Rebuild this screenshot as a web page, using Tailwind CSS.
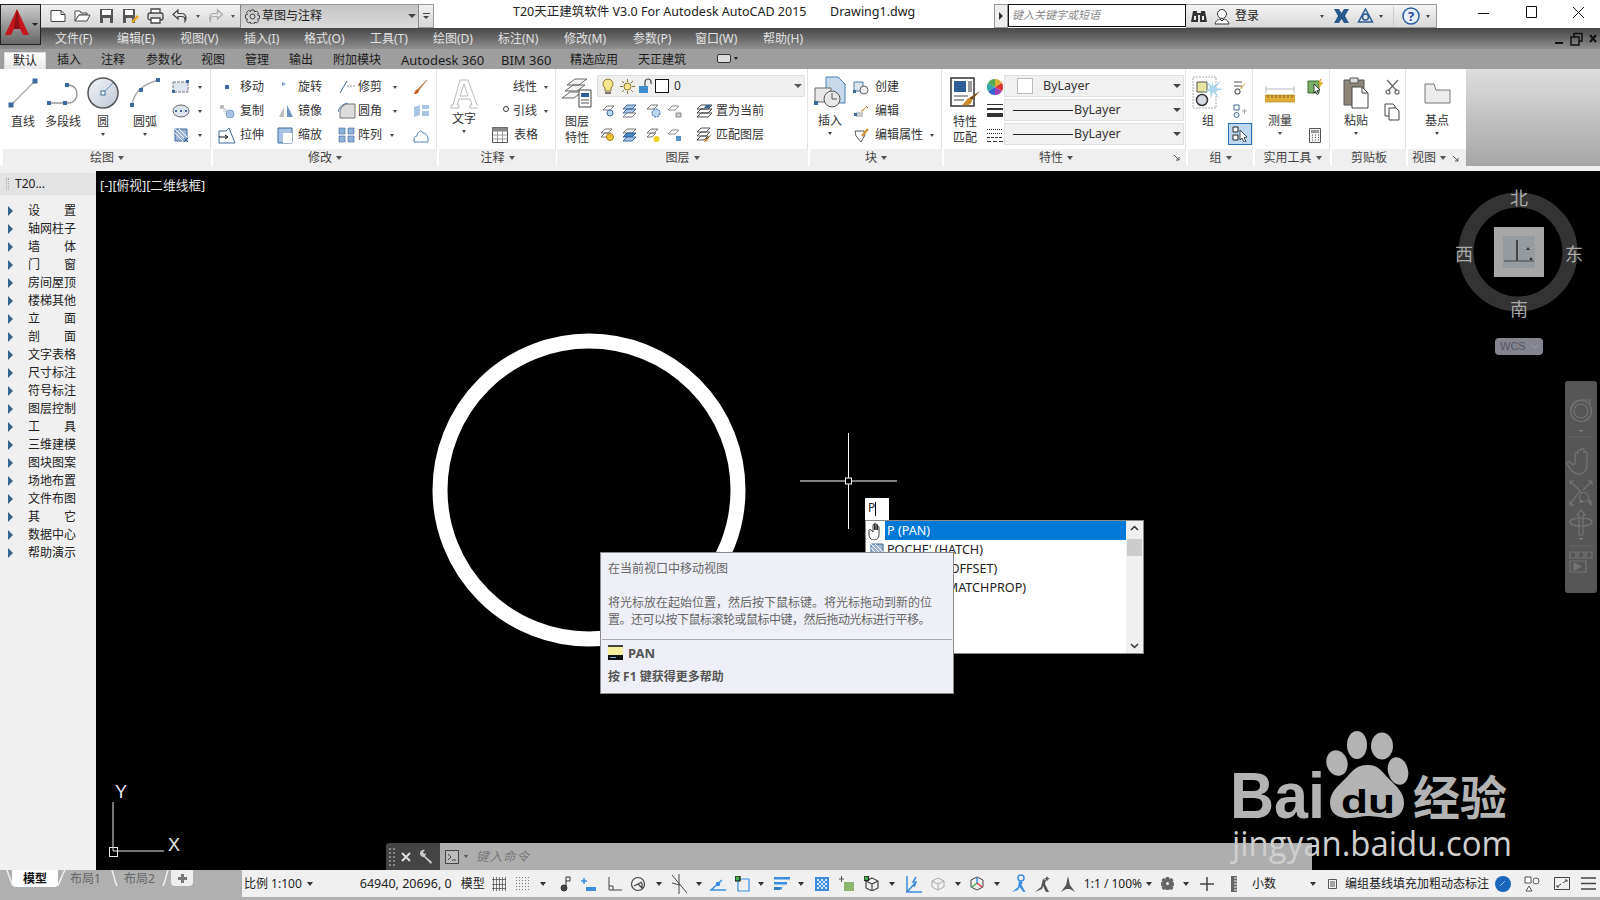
<!DOCTYPE html>
<html lang="zh">
<head>
<meta charset="UTF-8">
<title>T20天正建筑软件</title>
<script src="https://cdn.jsdelivr.net/npm/@tailwindcss/browser@4"></script>
</head>
<body class="w-[1600px] h-[900px] overflow-hidden relative flex flex-col bg-black text-[12px] leading-[14px] text-[#333] font-['Noto_Sans','Noto_Sans_CJK_SC',sans-serif]">

<!-- title bar -->
<div class="h-[28px] bg-white flex shrink-0 items-start relative">
  <div class="absolute left-0 top-[4px] w-[41px] h-[41px] z-10 border border-[#222] bg-gradient-to-b from-[#cfcfcf] to-[#666]">
    <svg class="absolute left-[3px] top-[3px]" width="36" height="30" viewBox="0 0 36 30"><path d="M13 1 L25 27 L19 27 L16 21 L10 21 L7 27 L1 27 Z" fill="#c4161c"/><path d="M13 1 L16 21 L10 21 Z" fill="#8c1014"/><path d="M28 15 h6 l-3 3z" fill="#222"/></svg>
  </div>
  <div class="ml-[41px] mt-[4px] w-[393px] h-[24px] flex items-center bg-gradient-to-b from-[#f2f2f2] to-[#d6d6d6] border-y border-r border-[#999]">
    <svg class="ml-[9px]" width="16" height="16" viewBox="0 0 16 16" fill="#fff" stroke="#444"><path d="M1 2.5h10l4 4v7H1z"/><path d="M11 2.5v4h4" fill="none"/></svg>
    <svg class="ml-[8px]" width="17" height="16" viewBox="0 0 17 16" fill="#fff" stroke="#444"><path d="M1 3h5l1 2h6v2H5L1 13z"/><path d="M5 7h11l-3 6H1z"/></svg>
    <svg class="ml-[8px]" width="15" height="16" viewBox="0 0 15 16"><path d="M1 1h13v14H1z" fill="#555"/><path d="M3 2h9v5H3z" fill="#fff"/><path d="M4 10h7v5H4z" fill="#ddd"/></svg>
    <svg class="ml-[8px]" width="17" height="16" viewBox="0 0 17 16"><path d="M1 1h12v14H1z" fill="#555"/><path d="M3 2h8v5H3z" fill="#fff"/><path d="M4 10h6v5H4z" fill="#ddd"/><path d="M9 14l6-7 2 2-6 6z" fill="#e5a723"/></svg>
    <svg class="ml-[8px]" width="17" height="16" viewBox="0 0 17 16" fill="#fff" stroke="#444" stroke-width="1.3"><path d="M4 5V1h9v4"/><rect x="1" y="5" width="15" height="7" rx="2" fill="#ddd"/><path d="M4 10h9v5H4z"/></svg>
    <svg class="ml-[8px]" width="15" height="14" viewBox="0 0 15 14" fill="none" stroke="#444" stroke-width="1.2"><path d="M6 1L1 5.5 6 10V7.5h4c2 0 3 1 3 3v2c1.500-2 1.500-8-3-8H6z"/></svg>
    <i class="ml-[9px] w-0 h-0 border-x-[2.500px] border-x-transparent border-t-[3px] border-t-[#555]"></i>
    <svg class="ml-[8px]" width="16" height="14" viewBox="0 0 15 14" fill="none" stroke="#aaa" stroke-width="1.2"><path d="M9 1l5 4.500L9 10V7.500H5c-2 0-3 1-3 3v2c-1.500-2-1.500-8 3-8h4z"/></svg>
    <i class="ml-[7px] w-0 h-0 border-x-[2.500px] border-x-transparent border-t-[3px] border-t-[#555]"></i>
    <div class="ml-[5px] w-[179px] h-[23px] bg-gradient-to-b from-[#c4c4c4] to-[#dcdcdc] border-x border-[#888] flex items-center">
      <svg class="ml-[4px]" width="15" height="15" viewBox="0 0 15 15" fill="none" stroke="#444"><circle cx="7.500" cy="7.500" r="2.500"/><path d="M6 1h3l.5 2 2-1 2 2-1 2 2 .5v3l-2 .5 1 2-2 2-2-1-.5 2H6l-.5-2-2 1-2-2 1-2-2-.5V6l2-.5-1-2 2-2 2 1z"/></svg>
      <span class="ml-[2px] text-[12px] text-[#222]">草图与注释</span>
      <i class="ml-auto mr-[2px] w-0 h-0 border-x-[4px] border-x-transparent border-t-[4px] border-t-[#444]"></i>
    </div>
    <div class="flex-1 flex flex-col items-center gap-[2px]"><i class="block w-[7px] h-[1px] bg-[#444]"></i><i class="w-0 h-0 border-x-[3.500px] border-x-transparent border-t-[3px] border-t-[#444]"></i></div>
  </div>
  <div class="ml-[79px] mt-[4px] w-[300px] whitespace-nowrap text-[#222] text-[12.5px] leading-[16px]">T20天正建筑软件 V3.0 For Autodesk AutoCAD 2015</div>
  <div class="ml-[17px] mt-[4px] text-[#222] text-[12.5px] leading-[16px]">Drawing1.dwg</div>
  <div class="absolute left-[994px] top-[4px] w-[14px] h-[24px] bg-[#eee] border border-[#999] flex items-center justify-center"><i class="w-0 h-0 border-y-[4px] border-y-transparent border-l-[4px] border-l-[#333]"></i></div>
  <div class="absolute left-[1008px] top-[4px] w-[178px] h-[23px] bg-white border border-[#111] pl-[3px] italic text-[11px] leading-[20px] text-[#888]">键入关键字或短语</div>
  <div class="absolute left-[1186px] top-[4px] w-[251px] h-[24px] bg-gradient-to-b from-[#f4f4f4] to-[#d8d8d8] border-y border-r border-[#999] flex items-center">
    <svg class="ml-[5px]" width="16" height="16" viewBox="0 0 16 16" fill="#333"><path d="M2 3h4v2h4V3h4l2 11H9V7H7v7H0z"/><path d="M3 8h2v4H3zM11 8h2v4h-2z" fill="#eee"/></svg>
    <svg class="ml-[7px]" width="16" height="17" viewBox="0 0 16 17" fill="#fff" stroke="#333"><circle cx="8" cy="6" r="4.500"/><path d="M1 16c1-4 3-4 5-5l2 2 2-2c2 1 4 1 5 5z"/></svg>
    <span class="ml-[5px] text-[#222]">登录</span>
    <i class="ml-[61px] w-0 h-0 border-x-[2.500px] border-x-transparent border-t-[3px] border-t-[#444]"></i>
    <svg class="ml-[10px]" width="15" height="14" viewBox="0 0 15 14" fill="#27598f"><path d="M0 0h5l2.500 4L10 0h5l-4 7 4 7h-5L7.500 10 5 14H0l4-7z"/></svg>
    <svg class="ml-[8px]" width="17" height="16" viewBox="0 0 17 16" fill="none" stroke="#2a5c94" stroke-width="1.500"><path d="M8.500 1l7 13h-14z"/><circle cx="8.500" cy="9" r="3"/></svg>
    <i class="ml-[5px] w-0 h-0 border-x-[2.500px] border-x-transparent border-t-[3px] border-t-[#444]"></i>
    <i class="ml-[10px] w-[1px] h-[20px] bg-[#ccc]"></i>
    <svg class="ml-[8px]" width="18" height="18" viewBox="0 0 18 18"><circle cx="9" cy="9" r="8" fill="#e8eef8" stroke="#2b5ea5" stroke-width="1.500"/><text x="9" y="13.500" font-size="13" font-weight="700" text-anchor="middle" fill="#1e4f9c">?</text></svg>
    <i class="ml-[6px] w-0 h-0 border-x-[2.500px] border-x-transparent border-t-[3px] border-t-[#444]"></i>
  </div>
  <svg class="absolute left-[1478px] top-[5px]" width="112" height="16" viewBox="0 0 112 16" fill="none" stroke="#111"><path d="M0 8.500h11"/><path d="M48.500 1.500h10v11h-10z"/><path d="M95 2l11 11M106 2L95 13"/></svg>
</div>

<!-- menu bar -->
<div class="h-[21px] shrink-0 flex items-center bg-gradient-to-b from-[#474747] to-[#909090] text-[#e2e2e2] pl-[55px] whitespace-nowrap">
  <span class="w-[62px]">文件(F)</span><span class="w-[63px]">编辑(E)</span><span class="w-[64px]">视图(V)</span><span class="w-[60px]">插入(I)</span><span class="w-[66px]">格式(O)</span><span class="w-[63px]">工具(T)</span><span class="w-[65px]">绘图(D)</span><span class="w-[66px]">标注(N)</span><span class="w-[69px]">修改(M)</span><span class="w-[62px]">参数(P)</span><span class="w-[68px]">窗口(W)</span><span>帮助(H)</span>
  <svg class="ml-auto mr-[2px]" width="44" height="14" viewBox="0 0 44 14" fill="none" stroke="#111" stroke-width="1.500"><path d="M1 11h8" stroke-width="2"/><path d="M17 5h8v8h-8zM20 5V1.500h8V9h-3"/><path d="M36 3l6 7M42 3l-6 7" stroke-width="2"/></svg>
</div>

<!-- ribbon tabs -->
<div class="h-[20px] shrink-0 flex items-end bg-[#9e9e9e] text-[#1c1c1c] pl-[4px] whitespace-nowrap">
  <span class="w-[42px] h-[17px] text-center bg-gradient-to-b from-[#fff] to-[#e8e8e8] border-x border-t border-[#ddd] leading-[16px]">默认</span>
  <span class="ml-[11px] w-[44px] h-[16px]">插入</span><span class="w-[45px] h-[16px]">注释</span><span class="w-[55px] h-[16px]">参数化</span><span class="w-[44px] h-[16px]">视图</span><span class="w-[44px] h-[16px]">管理</span><span class="w-[44px] h-[16px]">输出</span><span class="w-[68px] h-[16px]">附加模块</span><span class="w-[100px] h-[16px] text-[13px]">Autodesk 360</span><span class="w-[69px] h-[16px] text-[13px]">BIM 360</span><span class="w-[68px] h-[16px]">精选应用</span><span class="w-[79px] h-[16px]">天正建筑</span>
  <span class="h-[16px] flex items-start"><i class="w-[14px] h-[9px] rounded-[2px] border border-[#333] bg-[#ddd] mt-[1px]"></i><i class="ml-[3px] mt-[4px] w-0 h-0 border-x-[2.500px] border-x-transparent border-t-[3px] border-t-[#222]"></i></span>
</div>

<!-- ribbon -->
<div class="h-[102px] shrink-0 bg-[#f0f0f0] flex items-start">
  <div class="h-[97px] flex-none bg-white flex pl-[3px] gap-[2px]">

    <!-- 绘图 -->
    <section class="w-[208px] flex flex-col">
      <div class="h-[80px] flex border-r border-[#e4e4e4]">
        <div class="w-[40px] flex flex-col items-center pt-[8px]">
          <svg width="32" height="32" viewBox="0 0 32 32"><path d="M4 28L28 4" stroke="#aaa" stroke-width="1.500"/><path d="M1.500 25.500h5v5h-5zM25.500 1.500h5v5h-5z" fill="#3d6a9c"/></svg>
          <span class="mt-[6px]">直线</span>
        </div>
        <div class="w-[40px] flex flex-col items-center pt-[8px]">
          <svg width="34" height="32" viewBox="0 0 34 32" fill="none"><path d="M3 26h19c12 0 12-18 0-18" stroke="#999" stroke-width="1.500"/><path d="M1 24h4v4H1zM17 24h4v4h-4zM19 6h4v4h-4z" fill="#3d6a9c"/></svg>
          <span class="mt-[6px] whitespace-nowrap">多段线</span>
        </div>
        <div class="w-[40px] flex flex-col items-center pt-[8px]">
          <svg width="32" height="32" viewBox="0 0 32 32"><defs><linearGradient id="circleFill" x1="0" y1="0" x2="1" y2="1"><stop offset="0" stop-color="#f2f4f8"/><stop offset="1" stop-color="#bfc8d6"/></linearGradient></defs><circle cx="16" cy="16" r="15" fill="url(#circleFill)" stroke="#555" stroke-width="1.500"/><path d="M16 16L26 6" stroke="#6a93c4"/><rect x="14" y="14" width="4" height="4" fill="#fff" stroke="#3d6a9c"/></svg>
          <span class="mt-[6px]">圆</span>
          <i class="mt-[4px] w-0 h-0 border-x-[2.500px] border-x-transparent border-t-[3px] border-t-[#444]"></i>
        </div>
        <div class="ml-[2px] w-[40px] flex flex-col items-center pt-[8px]">
          <svg width="32" height="32" viewBox="0 0 32 32" fill="none"><path d="M3 28C5 16 12 8 29 3" stroke="#aaa" stroke-width="1.500"/><path d="M1 26h4v4H1zM10 11h4v4h-4zM27 1h4v4h-4z" fill="#3d6a9c"/></svg>
          <span class="mt-[6px]">圆弧</span>
          <i class="mt-[4px] w-0 h-0 border-x-[2.500px] border-x-transparent border-t-[3px] border-t-[#444]"></i>
        </div>
        <div class="flex-1 pt-[6px] flex flex-col">
          <div class="h-[24px] flex items-center pl-[7px]"><svg width="18" height="14" viewBox="0 0 18 14"><path d="M1 2h15v10H1z" fill="#dfe5ee" stroke="#777" stroke-dasharray="3 1"/><path d="M14 0h3v3h-3zM0 10h3v3H0z" fill="#3d6a9c"/></svg><i class="ml-[8px] w-0 h-0 border-x-[2.500px] border-x-transparent border-t-[3px] border-t-[#444]"></i></div>
          <div class="h-[24px] flex items-center pl-[7px]"><svg width="18" height="14" viewBox="0 0 18 14"><ellipse cx="9" cy="7" rx="8" ry="6" fill="#dfe5ee" stroke="#666"/><path d="M8 6h2v2H8zM3 6h2v2H3zM13 6h2v2h-2z" fill="#3d6a9c"/></svg><i class="ml-[8px] w-0 h-0 border-x-[2.500px] border-x-transparent border-t-[3px] border-t-[#444]"></i></div>
          <div class="h-[24px] flex items-center pl-[9px]"><svg width="16" height="15" viewBox="0 0 16 15"><path d="M1 1h12v12H1z" fill="#9db4d6" stroke="#3d6a9c"/><path d="M1 5l8 8M1 1l12 12M5 1l8 8" stroke="#fff"/><path d="M10 10l4 4M14 10l-4 4" stroke="#3d6a9c"/></svg><i class="ml-[8px] w-0 h-0 border-x-[2.500px] border-x-transparent border-t-[3px] border-t-[#444]"></i></div>
        </div>
      </div>
      <div class="h-[17px] pt-[1px] bg-[#efefef] flex items-center justify-center gap-[4px] text-[#444]">绘图<i class="w-0 h-0 border-x-[3.500px] border-x-transparent border-t-[4px] border-t-[#555]"></i></div>
    </section>

    <!-- 修改 -->
    <section class="w-[224px] flex flex-col">
      <div class="h-[80px] pt-[6px] border-r border-[#e4e4e4] grid grid-cols-[62px_62px_72px_28px] grid-rows-[24px_24px_24px]">
        <div class="flex items-center pl-[5px]"><span class="w-[18px] flex justify-center"><i class="w-[4px] h-[4px] bg-[#3d6a9c]"></i></span><span class="ml-[4px]">移动</span></div>
        <div class="flex items-center pl-[1px]"><svg class="w-[19px]" width="19" height="14" viewBox="0 0 19 14"><path d="M6 2l4 2-4 2z" fill="#7ca0c8"/></svg><span class="ml-[3px]">旋转</span></div>
        <div class="flex items-center pl-[1px]"><svg width="18" height="14" viewBox="0 0 18 14" fill="none"><path d="M2 13L9 1" stroke="#3d6a9c"/><path d="M9 6h8" stroke="#999" stroke-dasharray="2 1"/></svg><span class="ml-[2px]">修剪</span><i class="ml-[11px] w-0 h-0 border-x-[2.500px] border-x-transparent border-t-[3px] border-t-[#444]"></i></div>
        <div class="flex items-center justify-center pr-[4px]"><svg width="16" height="16" viewBox="0 0 16 16"><path d="M14 1L6 11l-1-1z" fill="#d08a2c" stroke="#8a5a1a" stroke-width=".5"/><path d="M5 10c-3 1-3 3-4 5 3 0 5-1 5-4z" fill="#c2571a"/></svg></div>

        <div class="flex items-center pl-[5px]"><svg width="18" height="14" viewBox="0 0 18 14"><rect x="2" y="1" width="4" height="4" rx="1" fill="#bbb"/><rect x="5" y="4" width="4" height="4" rx="1" fill="#ddd"/><circle cx="12" cy="10" r="4" fill="#a9c4e4" stroke="#7ca0c8"/></svg><span class="ml-[4px]">复制</span></div>
        <div class="flex items-center pl-[1px]"><svg width="19" height="14" viewBox="0 0 19 14"><path d="M8 3v10H3z" fill="#bbb"/><path d="M11 1v12h6z" fill="#6e95c2"/></svg><span class="ml-[3px]">镜像</span></div>
        <div class="flex items-center pl-[1px]"><svg width="18" height="16" viewBox="0 0 18 16"><path d="M2 15V9c0-4 3-7 7-8h8v14z" fill="#ddd" stroke="#777"/><path d="M0 9C1 4 5 1 10 0" stroke="#3d6a9c" fill="none"/></svg><span class="ml-[2px]">圆角</span><i class="ml-[11px] w-0 h-0 border-x-[2.500px] border-x-transparent border-t-[3px] border-t-[#444]"></i></div>
        <div class="flex items-center justify-center pr-[4px]"><svg width="17" height="14" viewBox="0 0 17 14"><path d="M1 3l6-2v10l-6 2zM9 1h7v4H9zM9 7h7v5H9z" fill="#a9c4e4"/></svg></div>

        <div class="flex items-center pl-[5px]"><svg width="18" height="17" viewBox="0 0 18 17"><path d="M1 4h7l3-3 6 15H1z" fill="#fff" stroke="#3d6a9c"/><path d="M1 10h8M7 8l3 2-3 2" stroke="#111" fill="none"/></svg><span class="ml-[4px]">拉伸</span></div>
        <div class="flex items-center pl-[1px]"><svg width="19" height="17" viewBox="0 0 19 17"><path d="M2 1h14v15H2z" fill="#a9c4e4" stroke="#3d6a9c"/><path d="M7 6h9v10H7z" fill="#fff"/></svg><span class="ml-[3px]">缩放</span></div>
        <div class="flex items-center pl-[1px]"><svg width="18" height="16" viewBox="0 0 18 16" fill="#8fb0d8" stroke="#3d6a9c" stroke-width=".6"><path d="M1 1h6v6H1zM10 1h6v6h-6zM1 9h6v6H1zM10 9h6v6h-6z"/></svg><span class="ml-[2px]">阵列</span><i class="ml-[8px] w-0 h-0 border-x-[2.500px] border-x-transparent border-t-[3px] border-t-[#444]"></i></div>
        <div class="flex items-center justify-center pr-[4px]"><svg width="17" height="15" viewBox="0 0 17 15" fill="none" stroke="#4e82bd"><path d="M1 14v-3c0-2 2-3 3-3 0-4 4-7 6-3 3 0 5 3 5 6v3z"/></svg></div>
      </div>
      <div class="h-[17px] pt-[1px] bg-[#efefef] flex items-center justify-center gap-[4px] text-[#444]">修改<i class="w-0 h-0 border-x-[3.500px] border-x-transparent border-t-[4px] border-t-[#555]"></i></div>
    </section>

    <!-- 注释 -->
    <section class="w-[117px] flex flex-col">
      <div class="h-[80px] flex border-r border-[#e4e4e4]">
        <div class="w-[50px] flex flex-col items-center pt-[10px]">
          <svg width="28" height="30" viewBox="0 0 28 30" fill="#fff" stroke="#bbb"><path d="M10 1h8l9 25h2v3h-9v-3h2l-2-6H9l-2 6h2v3H1v-3h2zM14 5l-4 12h8z"/></svg>
          <span class="mt-[3px]">文字</span>
          <i class="mt-[4px] w-0 h-0 border-x-[2.500px] border-x-transparent border-t-[3px] border-t-[#444]"></i>
        </div>
        <div class="flex-1 pt-[6px] flex flex-col">
          <div class="h-[24px] flex items-center pl-[24px]">线性<i class="ml-[7px] w-0 h-0 border-x-[2.500px] border-x-transparent border-t-[3px] border-t-[#444]"></i></div>
          <div class="h-[24px] flex items-center pl-[14px]"><i class="w-[6px] h-[6px] rounded-full border border-[#333] -mt-[4px]"></i><span class="ml-[4px]">引线</span><i class="ml-[7px] w-0 h-0 border-x-[2.500px] border-x-transparent border-t-[3px] border-t-[#444]"></i></div>
          <div class="h-[24px] flex items-center pl-[3px]"><svg width="16" height="16" viewBox="0 0 16 16"><path d="M.5.5h15v15H.5z" fill="#fff" stroke="#555"/><path d="M.5.5h15v4H.5z" fill="#888"/><path d="M1 8h14M1 12h14M5.500 4v11M10.500 4v11" stroke="#999"/></svg><span class="ml-[6px]">表格</span></div>
        </div>
      </div>
      <div class="h-[17px] pt-[1px] bg-[#efefef] flex items-center justify-center gap-[4px] text-[#444]">注释<i class="w-0 h-0 border-x-[3.500px] border-x-transparent border-t-[4px] border-t-[#555]"></i></div>
    </section>

    <!-- 图层 -->
    <section class="w-[251px] flex flex-col -ml-[1px]">
      <div class="h-[80px] flex border-r border-[#e4e4e4]">
        <div class="w-[42px] flex flex-col items-center pt-[8px]">
          <svg width="32" height="32" viewBox="0 0 32 32"><path d="M6 8L14 2h12l-8 6zM4 14l8-6h12l-8 6zM1 21l8-6h12l-8 6z" fill="#f4f4f4" stroke="#666"/><path d="M18 13h12v17H18z" fill="#fff" stroke="#444"/><path d="M20 16h8v4h-8z" fill="#2d5c96"/><path d="M20 23h8M20 26h8" stroke="#555"/></svg>
          <span class="mt-[5px] leading-[16px] text-center">图层<br>特性</span>
        </div>
        <div class="flex-1 pt-[6px] pr-[2px]">
          <div class="h-[22px] w-[208px] bg-[#efefef] rounded-[1px] border border-[#e0e0e0] flex items-center">
            <svg class="ml-[4px]" width="12" height="17" viewBox="0 0 12 17"><path d="M6 1a5 5 0 0 1 3 9v3H3v-3a5 5 0 0 1 3-9z" fill="#f5e58c" stroke="#8a7a30"/><path d="M3 14h6v2H3z" fill="#777"/></svg>
            <svg class="ml-[5px]" width="17" height="17" viewBox="0 0 17 17" fill="#f5e58c" stroke="#8a7a30"><circle cx="8.500" cy="8.500" r="3.500"/><path d="M8.500 1v3M8.500 13v3M1 8.500h3M13 8.500h3M3 3l2 2M12 12l2 2M14 3l-2 2M5 12l-2 2" fill="none"/></svg>
            <svg class="ml-[2px]" width="14" height="16" viewBox="0 0 14 16"><path d="M1 8h9v7H1z" fill="#3c8ed0"/><path d="M7 8V4a3 3 0 0 1 6 0v2" fill="none" stroke="#444" stroke-width="1.200"/></svg>
            <i class="ml-[3px] w-[14px] h-[14px] bg-white border-[1.500px] border-[#111]"></i>
            <span class="ml-[5px]">0</span>
            <i class="ml-auto mr-[2px] w-0 h-0 border-x-[4px] border-x-transparent border-t-[4px] border-t-[#555]"></i>
          </div>
          <div class="mt-[2px] h-[24px] flex items-center">
            <span class="w-[20px] flex justify-center"><svg width="15" height="14" viewBox="0 0 15 14"><path d="M3 6l4-4h7l-4 4z" fill="#fff" stroke="#777"/><circle cx="10" cy="9" r="3" fill="#bcd6ee" stroke="#3d6a9c"/></svg></span>
            <span class="w-[24px] flex justify-center"><svg width="15" height="14" viewBox="0 0 15 14"><path d="M1 5l4-4h9l-4 4zM1 9l4-4h9l-4 4z" fill="#a9c4e4" stroke="#3d6a9c"/><path d="M1 13l4-4h9l-4 4z" fill="#fff" stroke="#777"/></svg></span>
            <span class="w-[24px] flex justify-center"><svg width="15" height="14" viewBox="0 0 15 14"><path d="M1 5l4-4h7l-4 4z" fill="#fff" stroke="#777"/><circle cx="10" cy="9" r="4" fill="#bcd6ee" stroke="#2d5c96" stroke-dasharray="2 1"/></svg></span>
            <span class="w-[18px] flex justify-center"><svg width="15" height="14" viewBox="0 0 15 14"><path d="M1 6l4-4h7l-4 4z" fill="#fff" stroke="#888"/><path d="M9 9h5v4H9z" fill="#ccc" stroke="#888"/></svg></span>
            <span class="ml-[10px] w-[22px] flex justify-center"><svg width="17" height="15" viewBox="0 0 17 15"><path d="M1 5l4-4h11l-4 4zM1 9l4-4h11l-4 4zM1 13l4-4h11l-4 4z" fill="#fff" stroke="#444"/><path d="M10 1h5l-2 3h-5z" fill="#3d6a9c"/></svg></span>
            <span class="ml-[1px]">置为当前</span>
          </div>
          <div class="h-[24px] flex items-center">
            <span class="w-[20px] flex justify-center"><svg width="15" height="15" viewBox="0 0 15 15"><path d="M1 5l4-4h7l-4 4zM1 9l4-4h5l-4 4z" fill="#fff" stroke="#777"/><circle cx="10" cy="9" r="3.500" fill="#f2c230" stroke="#a08020"/></svg></span>
            <span class="w-[24px] flex justify-center"><svg width="15" height="14" viewBox="0 0 15 14"><path d="M1 5l4-4h9l-4 4z" fill="#eee" stroke="#777"/><path d="M1 9l4-4h9l-4 4z" fill="#4a86c5" stroke="#2d5c96"/><path d="M1 13l4-4h9l-4 4z" fill="#a9c4e4" stroke="#3d6a9c"/></svg></span>
            <span class="w-[24px] flex justify-center"><svg width="15" height="15" viewBox="0 0 15 15"><path d="M1 5l4-4h7l-4 4zM1 9l4-4h5l-4 4z" fill="#fff" stroke="#777"/><circle cx="10.500" cy="11" r="3" fill="#f2d120"/></svg></span>
            <span class="w-[18px] flex justify-center"><svg width="15" height="14" viewBox="0 0 15 14"><path d="M1 6l4-4h7l-4 4z" fill="#fff" stroke="#888"/><path d="M9 8h5v5H9z" fill="#5b93cc"/></svg></span>
            <span class="ml-[10px] w-[22px] flex justify-center"><svg width="17" height="16" viewBox="0 0 17 16"><path d="M1 5l4-4h9l-4 4zM1 9l4-4h9l-4 4zM1 13l4-4h7l-4 4z" fill="#fff" stroke="#555"/><path d="M16 7l-5 6-2-1z" fill="#8a5a1a"/><path d="M9 12l3 2-4 1z" fill="#d08a2c"/></svg></span>
            <span class="ml-[1px]">匹配图层</span>
          </div>
        </div>
      </div>
      <div class="h-[17px] pt-[1px] bg-[#efefef] flex items-center justify-center gap-[4px] text-[#444]">图层<i class="w-0 h-0 border-x-[3.500px] border-x-transparent border-t-[4px] border-t-[#555]"></i></div>
    </section>

    <!-- 块 -->
    <section class="w-[132px] flex flex-col">
      <div class="h-[80px] flex border-r border-[#e4e4e4]">
        <div class="w-[40px] flex flex-col items-center pt-[6px]">
          <svg width="32" height="34" viewBox="0 0 32 34"><path d="M12 2h12l7 7v19H12z" fill="#c7d8ec" stroke="#4a7cb3"/><path d="M1 13h16v14H1z" fill="#e8e8e8" stroke="#666"/><circle cx="18" cy="24" r="8" fill="#e8e8e8" stroke="#555"/><path d="M18 24v-6M18 24h5" stroke="#555"/><path d="M0 26h4v4H0z" fill="#3d6a9c"/></svg>
          <span class="mt-[5px]">插入</span>
          <i class="mt-[4px] w-0 h-0 border-x-[2.500px] border-x-transparent border-t-[3px] border-t-[#444]"></i>
        </div>
        <div class="flex-1 pt-[6px] flex flex-col">
          <div class="h-[24px] flex items-center"><span class="w-[22px] flex justify-center"><svg width="16" height="15" viewBox="0 0 16 15"><path d="M1 2h9v9H1z" fill="#dfe5ee" stroke="#4a7cb3"/><circle cx="11" cy="10" r="4" fill="#eee" stroke="#666"/><path d="M0 10h3v3H0z" fill="#3d6a9c"/></svg></span><span class="ml-[3px]">创建</span></div>
          <div class="h-[24px] flex items-center"><span class="w-[22px] flex justify-center"><svg width="16" height="15" viewBox="0 0 16 15"><path d="M3 8h7v5H3z" fill="#c9c9c9"/><path d="M1 9h3v3H1z" fill="#3d6a9c"/><path d="M15 1L9 8 8 7z" fill="#d08a2c"/><path d="M13 2l2 2" stroke="#c2571a"/></svg></span><span class="ml-[3px]">编辑</span></div>
          <div class="h-[24px] flex items-center"><span class="w-[22px] flex justify-center"><svg width="17" height="15" viewBox="0 0 17 15" fill="none"><path d="M2 3h9l1 4-4 7-5-6z" fill="#fff" stroke="#555"/><path d="M15 1l-6 7" stroke="#d08a2c" stroke-width="2"/></svg></span><span class="ml-[3px]">编辑属性</span><i class="ml-[7px] w-0 h-0 border-x-[2.500px] border-x-transparent border-t-[3px] border-t-[#444]"></i></div>
        </div>
      </div>
      <div class="h-[17px] pt-[1px] bg-[#efefef] flex items-center justify-center gap-[4px] text-[#444]">块<i class="w-0 h-0 border-x-[3.500px] border-x-transparent border-t-[4px] border-t-[#555]"></i></div>
    </section>

    <!-- 特性 -->
    <section class="w-[242px] flex flex-col">
      <div class="h-[80px] flex border-r border-[#e4e4e4]">
        <div class="w-[42px] flex flex-col items-center pt-[8px]">
          <svg width="32" height="32" viewBox="0 0 32 32"><path d="M2 1h23v28H2z" fill="#fff" stroke="#333" stroke-width="1.500"/><path d="M5 4h12v11H5z" fill="#2d5c96"/><path d="M19 4h4v11h-4z" fill="#999"/><path d="M5 19h14M5 23h10" stroke="#444"/><path d="M31 14L23 23l-3-2z" fill="#7a4a18"/><path d="M20 21c-3 1-4 5-7 7 5 1 10 0 10-5z" fill="#d08a2c"/></svg>
          <span class="mt-[5px] leading-[16px] text-center">特性<br>匹配</span>
        </div>
        <div class="w-[17px] pt-[6px] flex flex-col">
          <div class="h-[24px] flex items-center justify-center"><svg width="16" height="16" viewBox="0 0 16 16"><path d="M8 8V0a8 8 0 0 1 7 4z" fill="#d9b12e"/><path d="M8 8l7-4a8 8 0 0 1 0 8z" fill="#d33"/><path d="M8 8l7 4a8 8 0 0 1-7 4z" fill="#a33cb0"/><path d="M8 8v8a8 8 0 0 1-7-4z" fill="#3366cc"/><path d="M8 8l-7 4a8 8 0 0 1 0-8z" fill="#3aa"/><path d="M8 8L1 4a8 8 0 0 1 7-4z" fill="#5a5"/></svg></div>
          <div class="h-[24px] flex items-center justify-center"><svg width="16" height="16" viewBox="0 0 16 16" fill="#333"><path d="M0 1h16v1H0zM0 5h16v2H0zM0 10h16v4H0z"/></svg></div>
          <div class="h-[24px] flex items-center justify-center"><svg width="16" height="15" viewBox="0 0 16 15" fill="none" stroke="#333"><path d="M0 1.500h16" stroke-dasharray="1 1"/><path d="M0 5.500h16" stroke-dasharray="1 1"/><path d="M0 9.500h16" stroke-dasharray="3 1"/><path d="M0 13.500h16" stroke-dasharray="4 2"/></svg></div>
        </div>
        <div class="ml-[1px] w-[180px] pt-[6px] flex flex-col gap-[2px]">
          <div class="h-[22px] bg-[#f1f1f1] border border-[#e0e0e0] flex items-center"><i class="ml-[12px] w-[16px] h-[16px] bg-white border border-[#bbb]"></i><span class="ml-[10px] text-[12.5px]">ByLayer</span><i class="ml-auto mr-[2px] w-0 h-0 border-x-[4px] border-x-transparent border-t-[4px] border-t-[#444]"></i></div>
          <div class="h-[22px] bg-[#f1f1f1] border border-[#e0e0e0] flex items-center"><i class="ml-[8px] w-[60px] h-[1px] bg-[#222]"></i><span class="ml-[1px] text-[12.5px]">ByLayer</span><i class="ml-auto mr-[2px] w-0 h-0 border-x-[4px] border-x-transparent border-t-[4px] border-t-[#444]"></i></div>
          <div class="h-[22px] bg-[#f1f1f1] border border-[#e0e0e0] flex items-center"><i class="ml-[8px] w-[60px] h-[1px] bg-[#222]"></i><span class="ml-[1px] text-[12.5px]">ByLayer</span><i class="ml-auto mr-[2px] w-0 h-0 border-x-[4px] border-x-transparent border-t-[4px] border-t-[#444]"></i></div>
        </div>
      </div>
      <div class="relative h-[17px] pt-[1px] pr-[18px] bg-[#efefef] flex items-center justify-center gap-[4px] text-[#444]">特性<i class="w-0 h-0 border-x-[3.500px] border-x-transparent border-t-[4px] border-t-[#555]"></i><svg class="absolute right-[6px] top-[5px]" width="7" height="7" viewBox="0 0 7 7" fill="none" stroke="#555"><path d="M1 1l5 5M6 3v3H3"/></svg></div>
    </section>

    <!-- 组 -->
    <section class="w-[65px] flex flex-col">
      <div class="h-[80px] flex border-r border-[#e4e4e4]">
        <div class="w-[40px] flex flex-col items-center pt-[7px]">
          <svg width="33" height="33" viewBox="0 0 33 33"><path d="M1 1h23v31H1z" fill="none" stroke="#aaa" stroke-dasharray="2 1"/><path d="M5 6h10v10H5z" fill="#e8e5a0" stroke="#555"/><circle cx="10" cy="24" r="5.500" fill="#d5d9e0" stroke="#333" stroke-width="1.500"/><path d="M20 3l1 7 8-5-6 7 9 1-9 2 5 8-7-7-2 7-1-8-6 1 6-4-3-6 5 4z" fill="#a8d4ee"/></svg>
          <span class="mt-[5px]">组</span>
        </div>
        <div class="w-[24px] pt-[6px] flex flex-col items-center">
          <div class="h-[24px] flex items-center"><svg width="15" height="15" viewBox="0 0 15 15"><path d="M1 2h8M1 6h8" stroke="#555"/><rect x="2" y="9" width="5" height="5" rx="2" fill="#fff" stroke="#333"/><path d="M14 2L8 9 7 8z" fill="#d0a82c"/></svg></div>
          <div class="h-[24px] flex items-center"><svg width="15" height="15" viewBox="0 0 15 15" fill="none"><path d="M1 1h5v5H1z" stroke="#3d6a9c"/><circle cx="3.500" cy="11" r="2.500" stroke="#3d6a9c"/><path d="M9 7h5M11.500 5v5" stroke="#aaa"/></svg></div>
          <div class="h-[22px] w-[24px] bg-[#bcd8f0] border border-[#2a70b0] flex items-center justify-center"><svg width="16" height="16" viewBox="0 0 16 16"><path d="M1 1h5v5H1zM1 9h5v5H1z" fill="#fff" stroke="#222"/><path d="M8 4l7 7-3 .5 2 4-2 .5-2-4-2 2z" fill="#fff" stroke="#222" stroke-width=".8"/></svg></div>
        </div>
      </div>
      <div class="h-[17px] pt-[1px] bg-[#efefef] flex items-center justify-center gap-[4px] text-[#444]">组<i class="w-0 h-0 border-x-[3.500px] border-x-transparent border-t-[4px] border-t-[#555]"></i></div>
    </section>

    <!-- 实用工具 -->
    <section class="w-[75px] flex flex-col">
      <div class="h-[80px] flex border-r border-[#e4e4e4]">
        <div class="w-[50px] flex flex-col items-center pt-[14px]">
          <svg width="30" height="22" viewBox="0 0 30 22"><path d="M1 3v7M29 3v7M1 6h28" stroke="#bbb" fill="none"/><path d="M0 12h30v7H0z" fill="#e2ae3a" stroke="#aa7f20" stroke-width=".6"/><path d="M3 12v3M7 12v3M11 12v3M15 12v3M19 12v3M23 12v3M27 12v3" stroke="#7a5a14"/></svg>
          <span class="mt-[9px]">测量</span>
          <i class="mt-[4px] w-0 h-0 border-x-[2.500px] border-x-transparent border-t-[3px] border-t-[#444]"></i>
        </div>
        <div class="w-[20px] pt-[6px] flex flex-col items-center">
          <div class="h-[24px] flex items-center"><svg width="17" height="17" viewBox="0 0 17 17"><path d="M1 2h11v12H1z" fill="#7ab06a" stroke="#3e6b31"/><path d="M7 5l6 6-3 .5 1.500 3.500-1.500.5-1.500-3.500L7 14z" fill="#fff" stroke="#222" stroke-width=".8"/><path d="M14 0l-2 4h3l-3 4" fill="none" stroke="#e5a723" stroke-width="1.300"/></svg></div>
          <div class="h-[24px]"></div>
          <div class="h-[24px] flex items-center"><svg width="12" height="15" viewBox="0 0 12 15"><path d="M.5.5h11v14H.5z" fill="#f4f4f4" stroke="#555"/><path d="M2 2h8v3H2z" fill="#999"/><path d="M3 7h1M6 7h1M9 7h1M3 9.500h1M6 9.500h1M9 9.500h1M3 12h1M6 12h1M9 12h1" stroke="#444"/></svg></div>
        </div>
      </div>
      <div class="h-[17px] pt-[1px] bg-[#efefef] flex items-center justify-center gap-[4px] text-[#444] whitespace-nowrap">实用工具<i class="w-0 h-0 border-x-[3.500px] border-x-transparent border-t-[4px] border-t-[#555]"></i></div>
    </section>

    <!-- 剪贴板 -->
    <section class="w-[74px] flex flex-col">
      <div class="h-[80px] flex border-r border-[#e4e4e4]">
        <div class="w-[48px] flex flex-col items-center pt-[8px]">
          <svg width="26" height="32" viewBox="0 0 26 32"><path d="M1 3h20v25H1z" fill="#8d8478" stroke="#555"/><path d="M7 1h8v5H7z" fill="#ddd" stroke="#555"/><path d="M9 10h10l6 6v15H9z" fill="#fff" stroke="#444"/><path d="M19 10v6h6" fill="none" stroke="#444"/></svg>
          <span class="mt-[5px]">粘贴</span>
          <i class="mt-[4px] w-0 h-0 border-x-[2.500px] border-x-transparent border-t-[3px] border-t-[#444]"></i>
        </div>
        <div class="w-[24px] pt-[6px] flex flex-col items-center">
          <div class="h-[24px] flex items-center"><svg width="15" height="16" viewBox="0 0 15 16" fill="none" stroke="#666" stroke-width="1.200"><path d="M2 1l10 11M13 1L3 12"/><circle cx="3" cy="13" r="2"/><circle cx="12" cy="13" r="2"/></svg></div>
          <div class="h-[26px] flex items-center"><svg width="16" height="18" viewBox="0 0 16 18" fill="#fff" stroke="#444"><path d="M1 1h8l2 2v10H1z"/><path d="M5 5h7l3 3v9H5z"/></svg></div>
        </div>
      </div>
      <div class="h-[17px] pt-[1px] bg-[#efefef] flex items-center justify-center text-[#444]">剪贴板</div>
    </section>

    <!-- 视图 -->
    <section class="w-[58px] flex flex-col">
      <div class="h-[80px] flex flex-col items-center pt-[14px]">
        <svg width="27" height="21" viewBox="0 0 27 21"><path d="M1 1h9l2 6h14v13H1z" fill="#ececec" stroke="#777"/></svg>
        <span class="mt-[10px]">基点</span>
        <i class="mt-[4px] w-0 h-0 border-x-[2.500px] border-x-transparent border-t-[3px] border-t-[#444]"></i>
      </div>
      <div class="h-[17px] pt-[1px] bg-[#efefef] flex items-center pl-[4px] text-[#444]">视图<i class="ml-[4px] w-0 h-0 border-x-[3.500px] border-x-transparent border-t-[4px] border-t-[#555]"></i><svg class="ml-[6px]" width="7" height="7" viewBox="0 0 7 7" fill="none" stroke="#555"><path d="M1 1l5 5M6 3v3H3"/></svg></div>
    </section>
  </div>
  <div class="flex-1 h-[97px] bg-gradient-to-b from-[#dedede] to-[#a6a6a6]"></div>
</div>

<!-- workspace -->
<div class="h-[699px] shrink-0 flex">
  <aside class="w-[96px] shrink-0 bg-[#f0f0f0] flex flex-col">
    <div class="h-[22px] mt-[2px] bg-[#e3e3e3] rounded-t-[3px] flex items-center"><i class="ml-[6px] w-[3px] h-[12px] border-x border-dotted border-[#aaa]"></i><span class="ml-[6px] text-[#222]">T20...</span></div>
    <nav class="pt-[7px] flex flex-col text-[#222]">
      <div class="h-[18px] flex items-center pl-[8px]"><i class="w-0 h-0 border-y-[5px] border-y-transparent border-l-[5px] border-l-[#36648f]"></i><span class="ml-[15px] w-[48px] flex justify-between"><b class="font-normal">设</b><b class="font-normal">置</b></span></div>
      <div class="h-[18px] flex items-center pl-[8px]"><i class="w-0 h-0 border-y-[5px] border-y-transparent border-l-[5px] border-l-[#36648f]"></i><span class="ml-[15px] w-[48px]">轴网柱子</span></div>
      <div class="h-[18px] flex items-center pl-[8px]"><i class="w-0 h-0 border-y-[5px] border-y-transparent border-l-[5px] border-l-[#36648f]"></i><span class="ml-[15px] w-[48px] flex justify-between"><b class="font-normal">墙</b><b class="font-normal">体</b></span></div>
      <div class="h-[18px] flex items-center pl-[8px]"><i class="w-0 h-0 border-y-[5px] border-y-transparent border-l-[5px] border-l-[#36648f]"></i><span class="ml-[15px] w-[48px] flex justify-between"><b class="font-normal">门</b><b class="font-normal">窗</b></span></div>
      <div class="h-[18px] flex items-center pl-[8px]"><i class="w-0 h-0 border-y-[5px] border-y-transparent border-l-[5px] border-l-[#36648f]"></i><span class="ml-[15px] w-[48px]">房间屋顶</span></div>
      <div class="h-[18px] flex items-center pl-[8px]"><i class="w-0 h-0 border-y-[5px] border-y-transparent border-l-[5px] border-l-[#36648f]"></i><span class="ml-[15px] w-[48px]">楼梯其他</span></div>
      <div class="h-[18px] flex items-center pl-[8px]"><i class="w-0 h-0 border-y-[5px] border-y-transparent border-l-[5px] border-l-[#36648f]"></i><span class="ml-[15px] w-[48px] flex justify-between"><b class="font-normal">立</b><b class="font-normal">面</b></span></div>
      <div class="h-[18px] flex items-center pl-[8px]"><i class="w-0 h-0 border-y-[5px] border-y-transparent border-l-[5px] border-l-[#36648f]"></i><span class="ml-[15px] w-[48px] flex justify-between"><b class="font-normal">剖</b><b class="font-normal">面</b></span></div>
      <div class="h-[18px] flex items-center pl-[8px]"><i class="w-0 h-0 border-y-[5px] border-y-transparent border-l-[5px] border-l-[#36648f]"></i><span class="ml-[15px] w-[48px]">文字表格</span></div>
      <div class="h-[18px] flex items-center pl-[8px]"><i class="w-0 h-0 border-y-[5px] border-y-transparent border-l-[5px] border-l-[#36648f]"></i><span class="ml-[15px] w-[48px]">尺寸标注</span></div>
      <div class="h-[18px] flex items-center pl-[8px]"><i class="w-0 h-0 border-y-[5px] border-y-transparent border-l-[5px] border-l-[#36648f]"></i><span class="ml-[15px] w-[48px]">符号标注</span></div>
      <div class="h-[18px] flex items-center pl-[8px]"><i class="w-0 h-0 border-y-[5px] border-y-transparent border-l-[5px] border-l-[#36648f]"></i><span class="ml-[15px] w-[48px]">图层控制</span></div>
      <div class="h-[18px] flex items-center pl-[8px]"><i class="w-0 h-0 border-y-[5px] border-y-transparent border-l-[5px] border-l-[#36648f]"></i><span class="ml-[15px] w-[48px] flex justify-between"><b class="font-normal">工</b><b class="font-normal">具</b></span></div>
      <div class="h-[18px] flex items-center pl-[8px]"><i class="w-0 h-0 border-y-[5px] border-y-transparent border-l-[5px] border-l-[#36648f]"></i><span class="ml-[15px] w-[48px]">三维建模</span></div>
      <div class="h-[18px] flex items-center pl-[8px]"><i class="w-0 h-0 border-y-[5px] border-y-transparent border-l-[5px] border-l-[#36648f]"></i><span class="ml-[15px] w-[48px]">图块图案</span></div>
      <div class="h-[18px] flex items-center pl-[8px]"><i class="w-0 h-0 border-y-[5px] border-y-transparent border-l-[5px] border-l-[#36648f]"></i><span class="ml-[15px] w-[48px]">场地布置</span></div>
      <div class="h-[18px] flex items-center pl-[8px]"><i class="w-0 h-0 border-y-[5px] border-y-transparent border-l-[5px] border-l-[#36648f]"></i><span class="ml-[15px] w-[48px]">文件布图</span></div>
      <div class="h-[18px] flex items-center pl-[8px]"><i class="w-0 h-0 border-y-[5px] border-y-transparent border-l-[5px] border-l-[#36648f]"></i><span class="ml-[15px] w-[48px] flex justify-between"><b class="font-normal">其</b><b class="font-normal">它</b></span></div>
      <div class="h-[18px] flex items-center pl-[8px]"><i class="w-0 h-0 border-y-[5px] border-y-transparent border-l-[5px] border-l-[#36648f]"></i><span class="ml-[15px] w-[48px]">数据中心</span></div>
      <div class="h-[18px] flex items-center pl-[8px]"><i class="w-0 h-0 border-y-[5px] border-y-transparent border-l-[5px] border-l-[#36648f]"></i><span class="ml-[15px] w-[48px]">帮助演示</span></div>
    </nav>
  </aside>

  <main class="flex-1 relative bg-black overflow-hidden">
    <div class="absolute left-[4px] top-[7px] text-[12.7px] text-[#e8e8e8] whitespace-nowrap">[-][俯视][二维线框]</div>

    <!-- drawing, viewcube, navbar: viewBox uses page coordinates -->
    <svg class="absolute inset-0" width="1504" height="699" viewBox="96 171 1504 699" fill="none">
      <circle cx="589" cy="490" r="149" stroke="#fff" stroke-width="15"/>
      <path d="M800 481h97M848.500 433v96" stroke="#fff"/>
      <rect x="845.500" y="478" width="6" height="6" fill="#000" stroke="#fff"/>
      <!-- ucs -->
      <path d="M113 802v49M113 851h51" stroke="#e8e8e8"/>
      <rect x="109.500" y="847.500" width="8" height="9" stroke="#e8e8e8"/>
      <text x="115" y="798" font-size="18" fill="#e8e8e8" font-family="Liberation Sans">Y</text>
      <text x="168" y="851" font-size="18" fill="#e8e8e8" font-family="Liberation Sans">X</text>
      <!-- viewcube -->
      <circle cx="1518" cy="252" r="52" stroke="#333" stroke-width="15"/>
      <rect x="1494" y="227" width="50" height="50" fill="#a6a6a6"/>
      <rect x="1503" y="236" width="32" height="32" fill="#959b9f"/>
      <path d="M1517 240v21" stroke="#444" stroke-width="2"/><path d="M1504 261h30" stroke="#444"/>
      <path d="M1526 250h4l-2-3zM1529 260h4l-2-3z" fill="#333"/>
      <g fill="#aaa" font-size="18" text-anchor="middle" font-family="Noto Sans CJK SC">
        <text x="1519" y="205">北</text><text x="1519" y="316">南</text><text x="1464" y="261">西</text><text x="1574" y="261">东</text>
      </g>
      <rect x="1495" y="338" width="48" height="17" rx="4" fill="#84848f"/>
      <text x="1500" y="350" font-size="11" fill="#55555f" font-family="Liberation Sans">WCS</text>
      <path d="M1531 345l4 3 4-3" stroke="#9a9aa5"/>
      <!-- navbar -->
      <rect x="1565" y="381" width="32" height="212" rx="3" fill="#565656"/>
      <g stroke="#757575" stroke-width="1.200">
        <path d="M1569 437h24M1569 546h24" stroke="#666"/>
        <circle cx="1581" cy="411" r="7"/><circle cx="1581" cy="411" r="10.500"/><path d="M1571 411a10 11 0 0 1 10-11h9v4"/>
        <path d="M1575 463v-9c0-2 3-2 3 0v-3c0-2 3-2 3 0v-1c0-2 3-2 3 0v3c0-2 3-2 3 0v13c0 5-4 8-8 8-3 0-5-1-7-3l-5-7c-1-2 1-3 3-2l3 3z"/>
        <path d="M1570 481l22 22M1592 481l-9 9M1579 492l-9 13M1570 481h4M1570 481v4M1592 481h-4M1592 481v4M1570 505v-4M1570 505h4"/><circle cx="1584" cy="497" r="4.500" fill="#565656"/><path d="M1588 501l4 4"/>
        <path d="M1581 510l-4 5h2v20h4v-20h2z"/><ellipse cx="1581" cy="522" rx="11" ry="4"/>
        <path d="M1570 552h6v6h-6zM1578 552h6v6h-6zM1586 552h6v6h-6zM1570 561h16v11h-16z"/><path d="M1574 563l7 3.500-7 3.500z" fill="#757575"/>
      </g>
      <path d="M1579 430h4l-2 2zM1579 501h4l-2 2zM1579 538h4l-2 2z" fill="#888"/>
    </svg>

    <!-- dynamic input -->
    <div class="absolute left-[769px] top-[327px] w-[24px] h-[22px] bg-white text-[12px] leading-[20px] pl-[3px] text-[#222]">P<i class="inline-block w-[1px] h-[14px] bg-black align-middle"></i></div>
    <div class="absolute left-[769px] top-[349px] w-[279px] h-[134px] bg-white border border-[#888] flex text-[12.6px] text-[#222]">
      <ul class="w-[260px]">
        <li class="h-[19px] flex items-center"><svg class="ml-[2px]" width="17" height="18" viewBox="0 0 17 18" fill="#fff" stroke="#222" stroke-width=".9"><path d="M5 10V3c0-1 1.500-1 1.500 0v5-6c0-1 1.500-1 1.500 0v6-5c0-1 1.500-1 1.500 0v5-3c0-1 1.500-1 1.500 0v7c0 4-2 6-5 6-2 0-4-1-5-4L1 9c-.5-1 1-2 2-1z"/></svg><span class="h-[19px] flex-1 bg-[#0078d7] text-white pl-[2px] leading-[19px]">P (PAN)</span></li>
        <li class="h-[19px] flex items-center"><svg class="ml-[4px]" width="14" height="14" viewBox="0 0 14 14"><path d="M1 1h12v12H1z" fill="#9db4d6" stroke="#3d6a9c"/><path d="M1 5l8 8M1 1l12 12M5 1l8 8" stroke="#fff"/></svg><span class="ml-[3px]">POCHE' (HATCH)</span></li>
        <li class="h-[19px] flex items-center pl-[30px]">OFFSET' (OFFSET)</li>
        <li class="h-[19px] flex items-center pl-[23px]">PAINTER (MATCHPROP)</li>
      </ul>
      <div class="flex-1 bg-[#f0f0f0] flex flex-col items-center justify-between relative">
        <svg class="mt-[4px]" width="9" height="6" viewBox="0 0 9 6" fill="none" stroke="#333" stroke-width="1.500"><path d="M1 5l3.500-3.500L8 5"/></svg>
        <i class="absolute top-[18px] w-[15px] h-[17px] bg-[#cdcdcd]"></i>
        <svg class="mb-[4px]" width="9" height="6" viewBox="0 0 9 6" fill="none" stroke="#333" stroke-width="1.500"><path d="M1 1l3.500 3.500L8 1"/></svg>
      </div>
    </div>

    <!-- tooltip -->
    <div class="absolute left-[504px] top-[381px] w-[354px] h-[142px] bg-[#eff0f7] border border-[#8a8a8a] text-[#666] flex flex-col">
      <p class="ml-[7px] mt-[9px]">在当前视口中移动视图</p>
      <p class="ml-[7px] mt-[18px] leading-[17px] whitespace-nowrap">将光标放在起始位置，然后按下鼠标键。将光标拖动到新的位<br><span class="tracking-[-0.5px]">置。还可以按下鼠标滚轮或鼠标中键，然后拖动光标进行平移。</span></p>
      <i class="mt-[11px] mx-[1px] h-[1px] bg-[#aaa]"></i>
      <div class="ml-[7px] mt-[5px] flex items-center font-bold text-[13px] text-[#555]"><svg width="16" height="16" viewBox="0 0 16 16"><path d="M0 0h15v15H0z" fill="#f4f0a0"/><path d="M0 0h15v2H0z" fill="#444"/><path d="M0 10h15v5H0z" fill="#111"/><path d="M2 12h6v1H2z" fill="#7fb0e0"/></svg><span class="ml-[4px]">PAN</span></div>
      <p class="ml-[7px] mt-[9px] font-bold text-[#555]">按 F1 键获得更多帮助</p>
    </div>

    <!-- command line -->
    <div class="absolute left-[290px] top-[672px] w-[926px] h-[27px] flex rounded-tl-[3px] overflow-hidden">
      <div class="w-[54px] bg-[#444] flex items-center">
        <i class="ml-[3px] w-[6px] h-[18px] border-x-2 border-dotted border-[#888]"></i>
        <svg class="ml-[6px]" width="10" height="10" viewBox="0 0 10 10" stroke="#ddd" stroke-width="2"><path d="M1 1l8 8M9 1l-8 8"/></svg>
        <svg class="ml-[8px]" width="15" height="15" viewBox="0 0 15 15" fill="#ccc"><path d="M1 4a3.500 3.500 0 0 1 5-3L4 3l1 2 2-1a3.500 3.500 0 0 1-1 3l7 6-1 2-7-7A3.500 3.500 0 0 1 1 4z"/></svg>
      </div>
      <div class="flex-1 bg-[#aeaeae] flex items-center">
        <svg class="ml-[5px]" width="14" height="14" viewBox="0 0 14 14" fill="none" stroke="#444"><path d="M.5.5h13v13H.5z" fill="#bbb"/><path d="M3 4l3 3-3 3M7 10h4"/></svg>
        <i class="ml-[5px] w-0 h-0 border-x-[2.500px] border-x-transparent border-t-[3px] border-t-[#555]"></i>
        <span class="ml-[8px] italic text-[#777] text-[12.500px] tracking-[1px]">键入命令</span>
      </div>
    </div>
  </main>
</div>

<!-- layout tabs and status bar -->
<div class="h-[30px] shrink-0 flex bg-[#b0b0b0]">
  <div class="relative w-[242px] shrink-0 h-[18px] flex items-start text-[#666] whitespace-nowrap">
    <span class="ml-[12px] w-[46px] h-[17px] bg-white rounded-b-[4px] text-center font-bold text-[#111] leading-[17px]">模型</span>
    <span class="ml-[12px] w-[30px] leading-[17px]">布局1</span>
    <span class="ml-[24px] w-[31px] leading-[17px]">布局2</span>
    <span class="ml-[16px] w-[22px] h-[16px] bg-[#eee] rounded-b-[4px] flex items-center justify-center"><svg width="9" height="9" viewBox="0 0 9 9" fill="#777"><path d="M3 0h3v3h3v3H6v3H3V6H0V3h3z"/></svg></span>
    <svg class="absolute left-0 top-0" width="200" height="18" viewBox="0 0 200 18" fill="none" stroke="#efefef" stroke-width="1.500"><path d="M7 0c2 6 4 12 6 16M65 0c-3 5-5 11-7 16M112 0c2 6 3 12 5 16M168 0c-2 6-3 12-5 16"/></svg>
  </div>
  <div class="flex-1 min-w-0 h-[27px] bg-[#f0f0f0] flex items-center text-[#222] whitespace-nowrap">
    <span class="ml-[2px]">比例 1:100</span><i class="ml-[5px] w-0 h-0 border-x-[3px] border-x-transparent border-t-[4px] border-t-[#333]"></i>
    <span class="ml-[47px] w-[89px] text-[12.500px]">64940, 20696, 0</span>
    <span class="ml-[12px]">模型</span>
    <svg class="ml-[7px]" width="14" height="16" viewBox="0 0 14 16" stroke="#444"><path d="M1.500 1v14M4.500 1v14M7.500 1v14M10.500 1v14M13.500 1v14M0 3.500h14M0 8.500h14M0 12.500h14" stroke-width=".7"/></svg>
    <svg class="ml-[9px]" width="15" height="15" viewBox="0 0 15 15" stroke="#777" stroke-dasharray="1 2"><path d="M1 1.500h14M1 4.500h14M1 7.500h14M1 10.500h14M1 13.500h14"/></svg>
    <i class="ml-[10px] w-0 h-0 border-x-[3px] border-x-transparent border-t-[4px] border-t-[#333]"></i>
    <svg class="ml-[14px]" width="12" height="17" viewBox="0 0 12 17" fill="none" stroke="#333"><path d="M6 13V2h4v4H6"/><circle cx="4" cy="13" r="3" fill="#444"/></svg>
    <svg class="ml-[8px]" width="16" height="16" viewBox="0 0 16 16"><path d="M1 5h6M4 2v6" stroke="#3b8de0" stroke-width="1.500"/><path d="M6 11h10v4H6z" fill="#3b8de0"/></svg>
    <svg class="ml-[12px]" width="14" height="15" viewBox="0 0 14 15" fill="none" stroke="#444"><path d="M1 1v13h13M1 10h4v4"/></svg>
    <svg class="ml-[8px]" width="16" height="16" viewBox="0 0 16 16" fill="none" stroke="#444" stroke-width="1.200"><circle cx="8" cy="8" r="6.500"/><path d="M4 10l8-4M8 8l4 4V7"/></svg>
    <i class="ml-[10px] w-0 h-0 border-x-[3px] border-x-transparent border-t-[4px] border-t-[#333]"></i>
    <svg class="ml-[9px]" width="17" height="22" viewBox="0 0 17 22" fill="none" stroke="#444"><path d="M1 2l15 18M8 1v20M1 10l8 2"/></svg>
    <i class="ml-[8px] w-0 h-0 border-x-[3px] border-x-transparent border-t-[4px] border-t-[#333]"></i>
    <svg class="ml-[8px]" width="16" height="15" viewBox="0 0 16 15" fill="none" stroke="#3b8de0" stroke-width="1.500"><path d="M0 14h16M1 14L12 4"/><circle cx="8" cy="8" r="1.500" fill="#3b8de0"/></svg>
    <svg class="ml-[9px]" width="15" height="16" viewBox="0 0 15 16" fill="none" stroke="#3b8de0" stroke-width="1.200"><path d="M3 3h11v12H3z"/><path d="M0 0h5v5H0z" fill="#4caf50" stroke="#111"/></svg>
    <i class="ml-[8px] w-0 h-0 border-x-[3px] border-x-transparent border-t-[4px] border-t-[#333]"></i>
    <svg class="ml-[10px]" width="16" height="15" viewBox="0 0 16 15" fill="#3b8de0"><path d="M0 1h16v2.500H0zM0 6h13v2.500H0zM0 11h8v2.500H0z"/><path d="M0 11h6v3H0z" fill="#2f7bc8"/></svg>
    <i class="ml-[8px] w-0 h-0 border-x-[3px] border-x-transparent border-t-[4px] border-t-[#333]"></i>
    <svg class="ml-[11px]" width="14" height="14" viewBox="0 0 14 14"><path d="M0 0h14v14H0z" fill="#3b8de0"/><path d="M2 2h2v2H2zM6 2h2v2H6zM10 2h2v2h-2zM4 4h2v2H4zM8 4h2v2H8zM2 6h2v2H2zM6 6h2v2H6zM10 6h2v2h-2zM4 8h2v2H4zM8 8h2v2H8zM2 10h2v2H2zM6 10h2v2H6zM10 10h2v2h-2z" fill="#d5e6f7"/></svg>
    <svg class="ml-[10px]" width="15" height="15" viewBox="0 0 15 15"><path d="M0 3h5M2.500 0v6" stroke="#555"/><path d="M5 6h10v9H5z" fill="#8eb56f"/></svg>
    <svg class="ml-[10px]" width="15" height="15" viewBox="0 0 15 15" fill="none" stroke="#444" stroke-width="1.200"><path d="M8 2l6 3v7l-6 3-6-3V5zM2 5l6 3 6-3M8 8v7"/><rect x="0" y="0" width="4.500" height="4.500" fill="#4caf50" stroke="#222"/></svg>
    <i class="ml-[10px] w-0 h-0 border-x-[3px] border-x-transparent border-t-[4px] border-t-[#333]"></i>
    <svg class="ml-[11px]" width="16" height="18" viewBox="0 0 16 18" fill="none" stroke="#3b8de0" stroke-width="1.500"><path d="M0 17h16M1 17V1M1 17L10 7M10 2l-3 5h3l-2 5"/></svg>
    <svg class="ml-[9px]" width="14" height="14" viewBox="0 0 14 14" fill="none" stroke="#aaa"><path d="M7 1l6 3v6l-6 3-6-3V4zM1 4l6 3 6-3M7 7v6"/></svg>
    <i class="ml-[10px] w-0 h-0 border-x-[3px] border-x-transparent border-t-[4px] border-t-[#333]"></i>
    <svg class="ml-[9px]" width="14" height="15" viewBox="0 0 14 15" fill="none" stroke="#444"><path d="M7 1l6 3v7l-6 3-6-3V4z"/><path d="M7 7l-5 4" stroke="#4caf50" stroke-width="1.500"/><path d="M7 7l5 4" stroke="#d33" stroke-width="1.500"/><path d="M7 7V2" stroke="#3b8de0" stroke-width="1.500"/></svg>
    <i class="ml-[10px] w-0 h-0 border-x-[3px] border-x-transparent border-t-[4px] border-t-[#333]"></i>
    <svg class="ml-[11px]" width="16" height="19" viewBox="0 0 16 19" fill="#3b8de0"><circle cx="10" cy="4" r="3" fill="none" stroke="#3b8de0" stroke-width="1.500"/><path d="M8 7l-1 6-6 5 6-2 1.500-3 4 5 2 0-4-7 1-3z"/></svg>
    <svg class="ml-[8px]" width="16" height="19" viewBox="0 0 16 19" fill="#555"><path d="M8 5L6 13l-6 5 7-3 1-3 3 6h3l-4-8 1-4z"/><path d="M12 2l1 2 2 .5-2 1-1 2-1-2-2-1 2-.5z"/></svg>
    <svg class="ml-[10px]" width="14" height="18" viewBox="0 0 14 18" fill="#555"><path d="M7 1l2 9 5 7-5-3H5l-5 3 5-7z"/></svg>
    <span class="ml-[9px]">1:1 / 100%</span><i class="ml-[4px] w-0 h-0 border-x-[3px] border-x-transparent border-t-[4px] border-t-[#333]"></i>
    <svg class="ml-[9px]" width="13" height="13" viewBox="0 0 13 13" fill="#666"><path d="M5 0h3l.5 2 2-1 2 2-1 2 2 .500v3l-2 .500 1 2-2 2-2-1-.5 2H5l-.5-2-2 1-2-2 1-2-2-.5v-3l2-.5-1-2 2-2 2 1z"/><circle cx="6.500" cy="6.500" r="1.500" fill="#eee"/></svg>
    <i class="ml-[9px] w-0 h-0 border-x-[3px] border-x-transparent border-t-[4px] border-t-[#333]"></i>
    <svg class="ml-[11px]" width="14" height="14" viewBox="0 0 14 14" stroke="#444" stroke-width="1.500"><path d="M7 0v14M0 7h14"/></svg>
    <svg class="ml-[17px]" width="6" height="16" viewBox="0 0 6 16"><path d="M0 0h6v16H0z" fill="#666"/><path d="M3 2h3M3 5h3M3 8h3M3 11h3M3 14h3" stroke="#eee"/></svg>
    <span class="ml-[15px]">小数</span>
    <i class="ml-[34px] w-0 h-0 border-x-[3px] border-x-transparent border-t-[4px] border-t-[#333]"></i>
    <svg class="ml-[12px]" width="9" height="10" viewBox="0 0 9 10" fill="none" stroke="#555"><path d="M.5.5h8v9h-8zM2 3h5M2 5h5M2 7h5"/></svg>
    <span class="ml-[8px]">编组基线填充加粗动态标注</span>
    <svg class="ml-[6px]" width="16" height="16" viewBox="0 0 16 16"><circle cx="8" cy="8" r="8" fill="#1a66bd"/><path d="M5 10l5-5" stroke="#8fc0ee"/></svg>
    <svg class="ml-[13px]" width="16" height="16" viewBox="0 0 16 16" fill="#fff" stroke="#555"><path d="M1 1h6v6H1z"/><circle cx="12" cy="5" r="3"/><path d="M5 10l3 5H2z"/></svg>
    <svg class="ml-[14px]" width="16" height="13" viewBox="0 0 16 13" fill="none" stroke="#444"><path d="M.5.5h15v12H.5zM9 6l4-3M11 3h2v2M7 7l-4 3M3 8v2h2"/></svg>
    <svg class="ml-[11px]" width="15" height="13" viewBox="0 0 15 13" stroke="#444" stroke-width="1.500"><path d="M0 1h15M0 6.500h15M0 12h15"/></svg>
  </div>
</div>

<!-- watermark -->
<svg class="absolute inset-0 pointer-events-none" width="1600" height="900" viewBox="0 0 1600 900">
  <g fill="#b3b3b3">
    <text x="1230" y="818" font-size="64" font-weight="700" font-family="Liberation Sans" textLength="95" lengthAdjust="spacingAndGlyphs">Bai</text>
    <ellipse cx="1357" cy="745" rx="10" ry="14"/>
    <ellipse cx="1382" cy="746" rx="11" ry="13.500"/>
    <ellipse cx="1337" cy="763" rx="10.500" ry="13" transform="rotate(-15 1337 763)"/>
    <ellipse cx="1398" cy="771" rx="10" ry="14" transform="rotate(-15 1398 771)"/>
    <path d="M1368 765c11 0 15 8 21 14 7 7 15 13 15 24 0 12-10 16-18 15-6-1-12-2-18-2s-12 2-18 2c-9 1-20-3-20-15 0-11 8-17 15-24 6-6 10-14 23-14z"/>
    <text x="1413" y="815" font-size="47" font-weight="700" font-family="Noto Sans CJK SC">经验</text>
  </g>
  <text x="1341" y="813" font-size="34" font-weight="700" font-family="Liberation Sans" fill="#000" textLength="54" lengthAdjust="spacingAndGlyphs">du</text>
  <text x="1232" y="856" font-size="34" fill="#cfcfcf" font-family="Open Sans" textLength="280" lengthAdjust="spacingAndGlyphs">jingyan.baidu.com</text>
</svg>
</body>
</html>
